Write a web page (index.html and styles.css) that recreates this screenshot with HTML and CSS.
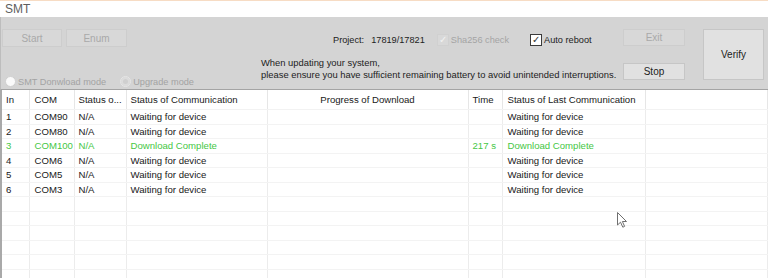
FILE: index.html
```html
<!DOCTYPE html>
<html lang="en">
<head>
  <meta charset="UTF-8">
  <title>SMT</title>
  <link rel="stylesheet" href="styles.css">
</head>
<body>
  <div class="window">
    <div class="titlebar">SMT</div>

    <div class="panel">
      <div class="left">
        <div class="btn-row">
          <button class="btn disabled start">Start</button>
          <button class="btn disabled enum">Enum</button>
        </div>
        <div class="radio-row">
          <label class="radio"><span class="dot"></span>SMT Donwload mode</label>
          <label class="radio checked"><span class="dot"></span>Upgrade mode</label>
        </div>
      </div>

      <div class="mid">
        <div class="project-row">
          <span class="project-label">Project:</span>
          <span class="project-id">17819/17821</span>
          <label class="check disabled"><span class="box">&#10003;</span>Sha256 check</label>
          <label class="check"><span class="box">&#10003;</span>Auto reboot</label>
        </div>
        <p class="notice">When updating your system,<br>please ensure you have sufficient remaining battery to avoid unintended interruptions.</p>
      </div>

      <div class="btn-col">
        <button class="btn disabled">Exit</button>
        <button class="btn">Stop</button>
      </div>
      <button class="btn verify">Verify</button>
    </div>

    <table class="grid">
      <colgroup>
        <col style="width:28px">
        <col style="width:45px">
        <col style="width:52px">
        <col style="width:141px">
        <col style="width:201px">
        <col style="width:34px">
        <col style="width:143px">
        <col>
      </colgroup>
      <thead>
        <tr>
          <th>In</th>
          <th>COM</th>
          <th>Status o...</th>
          <th>Status of Communication</th>
          <th class="center">Progress of Download</th>
          <th>Time</th>
          <th>Status of Last Communication</th>
          <th></th>
        </tr>
      </thead>
      <tbody>
        <tr><td>1</td><td>COM90</td><td>N/A</td><td>Waiting for device</td><td></td><td></td><td>Waiting for device</td><td></td></tr>
        <tr><td>2</td><td>COM80</td><td>N/A</td><td>Waiting for device</td><td></td><td></td><td>Waiting for device</td><td></td></tr>
        <tr class="done"><td>3</td><td>COM100</td><td>N/A</td><td>Download Complete</td><td></td><td>217 s</td><td>Download Complete</td><td></td></tr>
        <tr><td>4</td><td>COM6</td><td>N/A</td><td>Waiting for device</td><td></td><td></td><td>Waiting for device</td><td></td></tr>
        <tr><td>5</td><td>COM5</td><td>N/A</td><td>Waiting for device</td><td></td><td></td><td>Waiting for device</td><td></td></tr>
        <tr><td>6</td><td>COM3</td><td>N/A</td><td>Waiting for device</td><td></td><td></td><td>Waiting for device</td><td></td></tr>
        <tr><td></td><td></td><td></td><td></td><td></td><td></td><td></td><td></td></tr>
        <tr><td></td><td></td><td></td><td></td><td></td><td></td><td></td><td></td></tr>
        <tr><td></td><td></td><td></td><td></td><td></td><td></td><td></td><td></td></tr>
        <tr><td></td><td></td><td></td><td></td><td></td><td></td><td></td><td></td></tr>
        <tr><td></td><td></td><td></td><td></td><td></td><td></td><td></td><td></td></tr>
        <tr><td></td><td></td><td></td><td></td><td></td><td></td><td></td><td></td></tr>
      </tbody>
    </table>

    <!-- mouse pointer from the capture -->
    <svg class="cursor" width="12" height="17" viewBox="0 0 12 17">
      <path d="M0.5 0.5 L0.5 13 L3.5 10.2 L5.8 15.2 L7.6 14.4 L5.4 9.5 L9.5 9.5 Z" fill="#fff" stroke="#6f6f6f" stroke-width="1"/>
    </svg>
  </div>
</body>
</html>
```

FILE: styles.css
```css
body {
  margin: 0;
  padding: 0;
  background: #ffffff;
  font-family: "Liberation Sans", Arial, sans-serif;
  color: #222222;
}

.window {
  position: relative;
  width: 768px;
  height: 278px;
  overflow: hidden;
}

.titlebar {
  height: 16px;
  border-top: 1px solid #f7dcc4;
  padding-left: 5px;
  font-size: 12px;
  line-height: 16px;
  color: #5e5e5e;
  background: #ffffff;
}

.panel {
  display: flex;
  height: 60px;
  padding-top: 12px;
  background: #d4d4d4;
  border-bottom: 1px solid #a4a4a4;
  border-left: 1px solid #bdbdbd;
}

.btn {
  font-family: inherit;
  font-size: 10px;
  color: #222222;
  background: #e1e1e1;
  border: 1px solid #c6c6c6;
  padding: 0;
  margin: 0;
  height: 17px;
}

.btn.disabled {
  background: #d8d8d8;
  border-color: #cdcdcd;
  color: #a9a9a9;
}

/* left block */
.left {
  width: 257px;
  padding-left: 1px;
}

.btn-row {
  display: flex;
  gap: 4px;
}

.btn-row .btn {
  height: 18px;
}

.start {
  width: 60px;
}

.enum {
  width: 61px;
}

.radio-row {
  display: flex;
  gap: 14px;
  margin-top: 29px;
  padding-left: 3px;
}

.radio {
  display: flex;
  align-items: center;
  gap: 2px;
  font-size: 9.2px;
  color: #a3a3a3;
}

.dot {
  width: 9px;
  height: 9px;
  border-radius: 50%;
  background: #fafafa;
  border: 1px solid #d0d0d0;
}

.radio.checked .dot {
  background: #cfcfcf;
  border-color: #e6e6e6;
  box-shadow: inset 0 0 0 2px #dcdcdc;
}

/* middle block */
.mid {
  width: 364px;
}

.project-row {
  display: flex;
  align-items: center;
  height: 12px;
  margin-top: 5px;
  padding-left: 74px;
  font-size: 9.2px;
}

.project-id {
  margin-left: 7px;
  margin-right: 12px;
}

.check {
  display: flex;
  align-items: center;
  gap: 2px;
}

.check.disabled {
  color: #a4a4a4;
  margin-right: 21px;
}

.box {
  width: 10px;
  height: 10px;
  border: 1px solid #3a3a3a;
  background: #ffffff;
  font-size: 10px;
  line-height: 10px;
  text-align: center;
  color: #333333;
}

.check.disabled .box {
  border-color: #d0d0d0;
  background: #d8d8d8;
  color: #f2f2f2;
}

.notice {
  margin: 11px 0 0 2px;
  font-size: 9.4px;
  line-height: 12px;
  color: #1c1c1c;
}

/* right buttons */
.btn-col {
  display: flex;
  flex-direction: column;
  justify-content: space-between;
  width: 62px;
  height: 51px;
}

.btn-col .btn {
  width: 62px;
}

.verify {
  width: 61px;
  height: 51px;
  margin-left: 18px;
}

/* device grid */
.grid {
  width: 768px;
  table-layout: fixed;
  border-collapse: collapse;
  border-left: 2px solid #a9a9a9;
  font-size: 9.6px;
  color: #202020;
}

.grid th {
  height: 19px;
  font-weight: normal;
  text-align: left;
  padding: 0 0 0 4px;
  white-space: nowrap;
  overflow: hidden;
  border-right: 1px solid #e6e6e6;
  border-bottom: 1px solid #f2f2f2;
}

.grid th.center {
  text-align: center;
  padding: 0;
}

.grid td {
  height: 13.5px;
  padding: 0 0 0 4px;
  white-space: nowrap;
  border-right: 1px solid #ececec;
  border-bottom: 1px solid #f3f3f3;
}

.grid th:nth-child(2), .grid td:nth-child(2),
.grid th:nth-child(7), .grid td:nth-child(7) {
  padding-left: 5px;
}

.grid tr.done td {
  color: #45c745;
}

.cursor {
  position: absolute;
  left: 617px;
  top: 212px;
}
```
